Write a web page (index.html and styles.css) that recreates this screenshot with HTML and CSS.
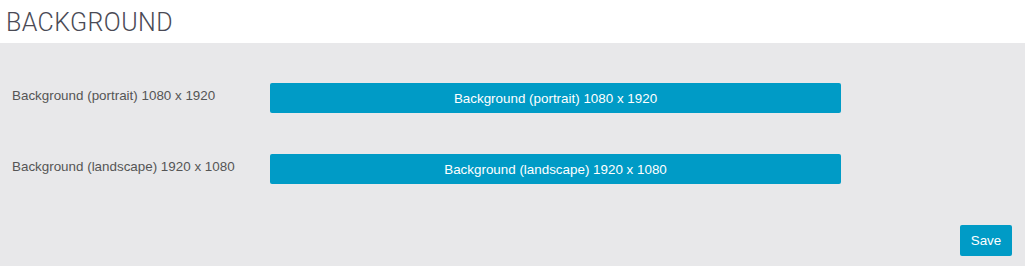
FILE: index.html
```html
<!DOCTYPE html>
<html lang="en">
<head>
	<meta charset="UTF-8">
	<meta name="viewport" content="width=device-width, initial-scale=1.0">
	<title>Background</title>
	<link rel="stylesheet" href="styles.css">
</head>
<body>
	<div class="header">
		<h1 class="title">BACKGROUND</h1>
	</div>
	<div class="content">
		<div class="row">
			<label class="label">Background (portrait) 1080 x 1920</label>
			<a href="#" class="btn-upload">Background (portrait) 1080 x 1920</a>
		</div>
		<div class="row">
			<label class="label">Background (landscape) 1920 x 1080</label>
			<a href="#" class="btn-upload">Background (landscape) 1920 x 1080</a>
		</div>
		<div class="actions">
			<a href="#" class="btn-save">Save</a>
		</div>
	</div>
</body>
</html>
```

FILE: styles.css
```css
html, body{ margin: 0; padding: 0; height: 100%;}
body{
	font-family: "Liberation Sans", Arial, sans-serif; background-color: #e8e8ea;
	color: #555;
}
.header{
	height: 43px; background-color: #fff; padding: 0 6px;
	display: flex; align-items: center;
}
.title{
	margin: 0; font-family: Roboto, "Liberation Sans", sans-serif; font-weight: 300;
	font-size: 25px; color: #4a4a55; letter-spacing: 0.4px; padding-top: 1px;
}
.content{ padding: 40px 13px 10px 12px;}
.row{
	display: flex; align-items: center; height: 30px; margin-bottom: 41px;
}
.label{ width: 258px; font-size: 13.4px; color: #555; padding-bottom: 5px;}
.btn-upload, .btn-save{
	display: flex; align-items: center; justify-content: center;
	background-color: #009bc6; color: #fff; text-decoration: none;
	font-size: 13.4px; border-radius: 2px;
}
.btn-upload{ width: 571px; height: 30px;}
.actions{ display: flex; justify-content: flex-end;}
.btn-save{ width: 52px; height: 31px;}
```
